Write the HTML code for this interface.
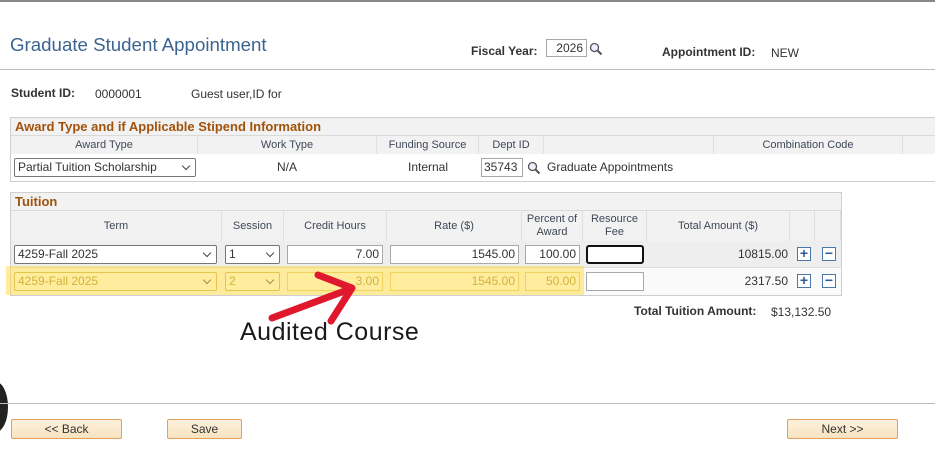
<!DOCTYPE html>
<html><head><style>
*{margin:0;padding:0;box-sizing:border-box}
body{width:935px;height:475px;background:#fff;position:relative;overflow:hidden;font-family:"Liberation Sans",Arial,sans-serif;font-size:12px;color:#333}
.a{position:absolute;white-space:nowrap}
.lbl{font-weight:bold;color:#333}
.box{position:absolute;border:1px solid #cfcfcf;background:#fff}
.ttl{position:absolute;left:0;right:0;background:#f2f2f2;color:#a0520a;font-weight:bold;font-size:13px;padding-left:4px;line-height:18px;border-bottom:1px solid #dadada}
.hd{position:absolute;background:#f2f2f2;color:#3f4857;font-size:11px;text-align:center;border-right:1px solid #e0e0e0;display:flex;align-items:center;justify-content:center;line-height:13px}
.in{position:absolute;border:1px solid #a8a8a8;background:#fff;font-size:12px;text-align:right;padding-right:3px;line-height:17px;height:19px}
.sel{position:absolute;border:1px solid #777;background:#fff;font-size:12px;padding-left:3px;line-height:17px;height:19px;border-radius:2px}
.sel:after{content:"";position:absolute;right:6px;top:4px;width:5px;height:5px;border-right:1.5px solid #444;border-bottom:1.5px solid #444;transform:rotate(45deg)}
.btn{position:absolute;height:20px;border:1px solid #e0a060;background:linear-gradient(#fdf1dc,#f8e3c0);text-align:center;line-height:18px;font-size:12px;color:#333;border-radius:2px}
.pm{position:absolute;width:14px;height:14px;border:1px solid #4a78a8;background:#fff;color:#2c5c94;font-weight:bold;font-size:14px;line-height:11px;text-align:center}
</style></head><body>
<div class="a" style="left:0;top:0;width:935px;height:2px;background:#888"></div>
<div class="a" style="left:10px;top:34px;font-size:18.7px;color:#3d6491">Graduate Student Appointment</div>
<div class="a lbl" style="left:471px;top:44px">Fiscal Year:</div>
<div class="in" style="left:546px;top:39px;width:41px;height:18px;line-height:16px">2026</div>
<svg class="a" style="left:589px;top:42px" width="14" height="14"><circle cx="5.5" cy="5.5" r="4" fill="#eef" stroke="#555" stroke-width="1.3"/><line x1="8.5" y1="8.5" x2="12.5" y2="12.5" stroke="#555" stroke-width="2"/></svg>
<div class="a lbl" style="left:662px;top:45px">Appointment ID:</div>
<div class="a" style="left:771px;top:46px">NEW</div>
<div class="a" style="left:0;top:69px;width:935px;height:1px;background:#bbb"></div>
<div class="a lbl" style="left:11px;top:86px">Student ID:</div>
<div class="a" style="left:95px;top:87px">0000001</div>
<div class="a" style="left:191px;top:87px">Guest user,ID for</div>

<div class="box" style="left:10px;top:117px;width:930px;height:65px">
<div class="ttl" style="top:0;height:18px">Award Type and if Applicable Stipend Information</div>
<div class="hd" style="left:0;top:18px;width:187px;height:18px">Award Type</div>
<div class="hd" style="left:187px;top:18px;width:179px;height:18px">Work Type</div>
<div class="hd" style="left:366px;top:18px;width:102px;height:18px">Funding Source</div>
<div class="hd" style="left:468px;top:18px;width:65px;height:18px">Dept ID</div>
<div class="hd" style="left:533px;top:18px;width:170px;height:18px"></div>
<div class="hd" style="left:703px;top:18px;width:189px;height:18px">Combination Code</div>
<div class="hd" style="left:892px;top:18px;width:40px;height:18px"></div>
<div class="sel" style="left:3px;top:40px;width:182px">Partial Tuition Scholarship</div>
<div class="a" style="left:266px;top:42px">N/A</div>
<div class="a" style="left:397px;top:42px">Internal</div>
<div class="in" style="left:470px;top:40px;width:42px;text-align:left;padding-left:2px">35743</div>
<svg class="a" style="left:516px;top:43px" width="14" height="14"><circle cx="5.5" cy="5.5" r="4" fill="#eef" stroke="#555" stroke-width="1.3"/><line x1="8.5" y1="8.5" x2="12.5" y2="12.5" stroke="#555" stroke-width="2"/></svg>
<div class="a" style="left:536px;top:42px">Graduate Appointments</div>
</div>

<div class="box" style="left:10px;top:192px;width:832px;height:104px">
<div class="ttl" style="top:0;height:18px">Tuition</div>
<div class="hd" style="left:0;top:18px;width:211px;height:30px">Term</div>
<div class="hd" style="left:211px;top:18px;width:62px;height:30px">Session</div>
<div class="hd" style="left:273px;top:18px;width:103px;height:30px">Credit Hours</div>
<div class="hd" style="left:376px;top:18px;width:135px;height:30px">Rate ($)</div>
<div class="hd" style="left:511px;top:18px;width:61px;height:30px">Percent of<br>Award</div>
<div class="hd" style="left:572px;top:18px;width:64px;height:30px">Resource<br>Fee</div>
<div class="hd" style="left:636px;top:18px;width:143px;height:30px">Total Amount ($)</div>
<div class="hd" style="left:779px;top:18px;width:25px;height:30px"></div>
<div class="hd" style="left:804px;top:18px;width:26px;height:30px"></div>
<div class="a" style="left:0;top:48px;width:830px;height:27px;background:#eeeeee;border-bottom:1px solid #ddd"></div>
<div class="a" style="left:0;top:75px;width:830px;height:27px;background:#fafafa"></div>
<div class="sel" style="left:3px;top:52px;width:203px">4259-Fall 2025</div>
<div class="sel" style="left:214px;top:52px;width:55px">1</div>
<div class="in" style="left:276px;top:52px;width:96px">7.00</div>
<div class="in" style="left:379px;top:52px;width:129px">1545.00</div>
<div class="in" style="left:514px;top:52px;width:55px">100.00</div>
<div class="in" style="left:575px;top:52px;width:58px;border:2px solid #111;border-radius:3px"></div>
<div class="a" style="left:700px;top:54px;width:77px;text-align:right">10815.00</div>
<div class="pm" style="left:786px;top:54px">+</div>
<div class="pm" style="left:811px;top:54px">−</div>
<div class="sel" style="left:3px;top:79px;width:203px;color:#a08c40;border-color:#c8b060">4259-Fall 2025</div>
<div class="sel" style="left:214px;top:79px;width:55px;color:#a08c40;border-color:#c8b060">2</div>
<div class="in" style="left:276px;top:79px;width:96px;color:#a08c40;border-color:#e0cc80">3.00</div>
<div class="in" style="left:379px;top:79px;width:129px;color:#a08c40;border-color:#e0cc80">1545.00</div>
<div class="in" style="left:514px;top:79px;width:55px;color:#a08c40;border-color:#e0cc80">50.00</div>
<div class="in" style="left:575px;top:79px;width:58px"></div>
<div class="a" style="left:700px;top:81px;width:77px;text-align:right">2317.50</div>
<div class="pm" style="left:786px;top:81px">+</div>
<div class="pm" style="left:811px;top:81px">−</div>
</div>
<div class="a" style="left:6px;top:266px;width:578px;height:29px;background:rgba(255,218,60,0.5)"></div>

<svg class="a" style="left:0;top:0" width="935" height="475"><g stroke="#e0182e" stroke-width="7" stroke-linecap="round" stroke-linejoin="round" fill="none"><line x1="272" y1="318" x2="350" y2="289"/><polyline points="318,275 352,288 331,321"/></g></svg>
<div class="a" style="left:240px;top:318px;font-size:25px;letter-spacing:0.5px;color:#1a1a1a">Audited Course</div>

<div class="a lbl" style="left:634px;top:304px">Total Tuition Amount:</div>
<div class="a" style="left:771px;top:305px">$13,132.50</div>

<div class="a" style="left:-16px;top:382px;width:24px;height:50px;border-radius:50%;background:#222"></div>
<div class="a" style="left:0;top:403px;width:935px;height:1px;background:#bbb"></div>
<div class="btn" style="left:11px;top:419px;width:111px">&lt;&lt; Back</div>
<div class="btn" style="left:167px;top:419px;width:75px">Save</div>
<div class="btn" style="left:787px;top:419px;width:111px">Next &gt;&gt;</div>
</body></html>
